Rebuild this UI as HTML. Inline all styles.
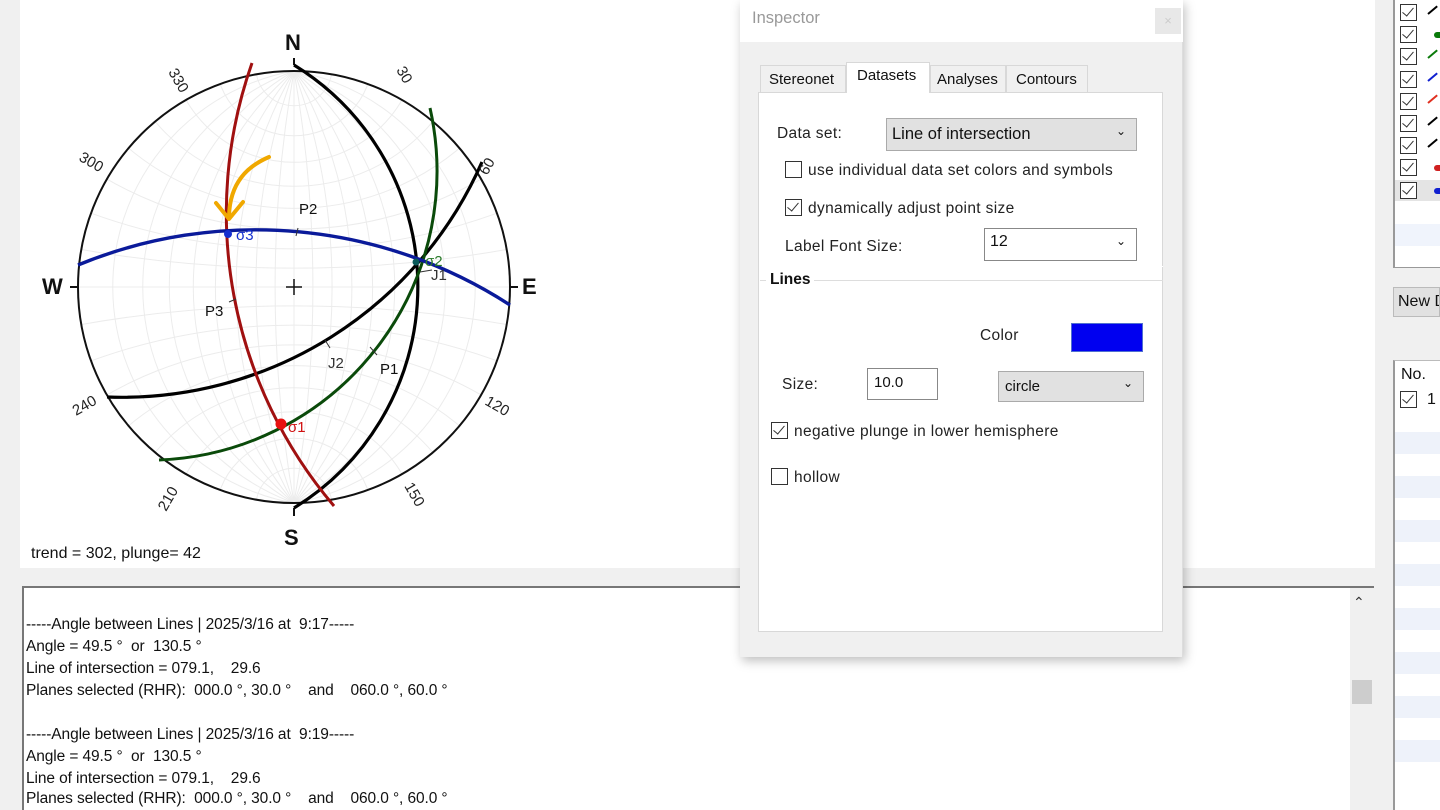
<!DOCTYPE html>
<html><head><meta charset="utf-8">
<style>
*{margin:0;padding:0;box-sizing:border-box}
html,body{width:1440px;height:810px;overflow:hidden}
body{background:#f0f0f0;font-family:"Liberation Sans",sans-serif;position:relative;color:#111}
.abs{position:absolute}
#plot{left:20px;top:0;width:1355px;height:568px;background:#fff}
#txt{left:22px;top:586px;width:1352px;height:224px;background:#fff;border-top:2px solid #777;border-left:2px solid #777;overflow:hidden}
#txt div{position:absolute;left:2px;font-size:15.5px;white-space:pre;letter-spacing:-0.1px}
.cb{position:absolute;width:17px;height:17px;border:1.5px solid #333;background:#fff}
.cb.on::after{content:"";position:absolute;left:4px;top:0px;width:5px;height:10px;border:solid #333;border-width:0 1.6px 1.6px 0;transform:rotate(40deg)}
#insp{left:740px;top:0;width:443px;height:657px;background:#f0f0f0;box-shadow:2px 4px 10px rgba(0,0,0,.25);border-right:1px solid #ddd}
.lbl{position:absolute;font-size:15.5px;color:#222;letter-spacing:0.35px;white-space:nowrap}
</style></head><body>
<div id="plot" class="abs"></div>
<svg class="abs" style="left:0;top:0" width="740" height="568">
<defs><clipPath id="cp"><circle cx="294" cy="287" r="216"/></clipPath></defs>
<g id="grid" clip-path="url(#cp)" stroke="#ececec" stroke-width="1" fill="none"></g>
<circle cx="294" cy="287" r="216" fill="none" stroke="#111" stroke-width="2"/>
<line x1="294" y1="58" x2="294" y2="65" stroke="#111" stroke-width="2"/>
<line x1="294" y1="508" x2="294" y2="516" stroke="#111" stroke-width="2"/>
<line x1="70" y1="287" x2="78" y2="287" stroke="#111" stroke-width="2"/>
<line x1="510" y1="287" x2="518" y2="287" stroke="#111" stroke-width="2"/>
<line x1="286" y1="287" x2="302" y2="287" stroke="#111" stroke-width="1.5"/>
<line x1="294" y1="279" x2="294" y2="295" stroke="#111" stroke-width="1.5"/>
<g fill="none" stroke-width="3.2">
<path d="M294 65 A260 260 0 0 1 294 508" stroke="#000"/>
<path d="M107 397 A393 393 0 0 0 482 162" stroke="#000"/>
</g>
<g fill="none" stroke-width="3">
<path d="M430 108 A289 289 0 0 1 159 460" stroke="#0a4a0a"/>
<path d="M252 63 A452 452 0 0 0 334 506" stroke="#a01010"/>
<path d="M78 265 A467 467 0 0 1 510 305" stroke="#0a1a9a" stroke-width="3.4"/>
</g>
<g stroke="#333" stroke-width="1"><line x1="298" y1="228" x2="296" y2="236"/><line x1="229" y1="302" x2="236" y2="299"/><line x1="325" y1="340" x2="330" y2="348"/><line x1="370" y1="347" x2="377" y2="355"/><line x1="420" y1="272" x2="432" y2="270"/></g>
<circle cx="281" cy="424" r="5.5" fill="#e81010"/>
<circle cx="228" cy="234" r="4" fill="#1530d0"/>
<circle cx="416" cy="262" r="3.5" fill="#0a5a5a"/>
<g font-size="15" fill="#111">
<text x="299" y="214">P2</text><text x="205" y="316">P3</text><text x="328" y="368" fill="#333">J2</text><text x="380" y="374">P1</text><text x="431" y="280" fill="#333">J1</text>
<text x="236" y="240" fill="#1530d0">σ3</text><text x="425" y="266" fill="#2a7a2a">σ2</text><text x="288" y="432" fill="#d01010">σ1</text>
</g>
<g font-size="22" font-weight="bold" fill="#111">
<text x="285" y="50">N</text><text x="284" y="545">S</text><text x="42" y="294">W</text><text x="522" y="294">E</text>
</g>
<g font-size="15" fill="#222">
<text transform="translate(168,72) rotate(60)">330</text>
<text transform="translate(396,70) rotate(60)">30</text>
<text transform="translate(78,160) rotate(30)">300</text>
<text transform="translate(487,176) rotate(-60)">60</text>
<text transform="translate(484,404) rotate(30)">120</text>
<text transform="translate(404,486) rotate(60)">150</text>
<text transform="translate(166,512) rotate(-60)">210</text>
<text transform="translate(76,416) rotate(-30)">240</text>
</g>
<text x="31" y="558" font-size="16" fill="#111">trend = 302, plunge= 42</text>
<path d="M269 157 C248 166 230 182 229 216" fill="none" stroke="#f0a800" stroke-width="4" stroke-linecap="round"/>
<path d="M216 203 L229 219 L243 202" fill="none" stroke="#f0a800" stroke-width="4" stroke-linecap="round" stroke-linejoin="round"/>
</svg>

<div id="txt" class="abs">
<div style="top:28px">-----Angle between Lines | 2025/3/16 at  9:17-----</div>
<div style="top:50px">Angle = 49.5 °  or  130.5 °</div>
<div style="top:72px">Line of intersection = 079.1,    29.6</div>
<div style="top:94px">Planes selected (RHR):  000.0 °, 30.0 °    and    060.0 °, 60.0 °</div>
<div style="top:138px">-----Angle between Lines | 2025/3/16 at  9:19-----</div>
<div style="top:160px">Angle = 49.5 °  or  130.5 °</div>
<div style="top:182px">Line of intersection = 079.1,    29.6</div>
<div style="top:202px">Planes selected (RHR):  000.0 °, 30.0 °    and    060.0 °, 60.0 °</div>
<div style="left:1326px;top:0;width:24px;height:222px;background:#f0f0f0"></div>
<div style="left:1329px;top:6px;font-size:14px;color:#333">&#8963;</div>
<div style="left:1328px;top:92px;width:20px;height:24px;background:#cdcdcd"></div>
</div>

<div class="abs" style="left:1393px;top:0;width:47px;height:268px;background:#fff;border-left:2px solid #999;border-bottom:1px solid #999"></div>
<div class="abs" style="left:1395px;top:180px;width:45px;height:21px;background:#e4e4e4"></div>
<div class="abs" style="left:1395px;top:224px;width:45px;height:22px;background:#f0f4fc"></div>
<div id="rl"></div>
<div class="abs" style="left:1393px;top:287px;width:47px;height:30px;background:#e1e1e1;border:1px solid #bbb;font-size:16px;padding:5px 0 0 4px;white-space:nowrap;overflow:hidden">New D</div>
<div class="abs" style="left:1393px;top:360px;width:47px;height:450px;background:#fff;border-left:2px solid #999;border-top:1px solid #bbb"></div>
<div id="rs"></div>
<div class="abs" style="left:1401px;top:366px;font-size:16px">No.</div>
<div class="cb on" style="left:1400px;top:391px"></div>
<div class="abs" style="left:1427px;top:391px;font-size:16px">1</div>

<div id="insp" class="abs">
<div class="abs" style="left:0;top:0;width:443px;height:42px;background:#fff"></div>
<div class="abs" style="left:12px;top:9px;font-size:16.5px;color:#999">Inspector</div>
<div class="abs" style="left:415px;top:8px;width:26px;height:26px;background:#e8e8e8;color:#ccc;font-size:13px;text-align:center;line-height:26px">×</div>
<div class="abs" style="left:18px;top:92px;width:405px;height:540px;background:#fff;border:1px solid #d8d8d8"></div>
<div class="abs" style="left:20px;top:65px;width:86px;height:27px;background:#f0f0f0;border:1px solid #d8d8d8;border-bottom:none;font-size:15px;padding:5px 0 0 8px">Stereonet</div>
<div class="abs" style="left:106px;top:62px;width:84px;height:31px;background:#fff;border:1px solid #d8d8d8;border-bottom:none;font-size:15px;padding:4px 0 0 10px">Datasets</div>
<div class="abs" style="left:190px;top:65px;width:76px;height:27px;background:#f0f0f0;border:1px solid #d8d8d8;border-bottom:none;font-size:15px;padding:5px 0 0 6px">Analyses</div>
<div class="abs" style="left:266px;top:65px;width:82px;height:27px;background:#f0f0f0;border:1px solid #d8d8d8;border-bottom:none;font-size:15px;padding:5px 0 0 9px">Contours</div>
<div class="lbl" style="left:37px;top:125px">Data set:</div>
<div class="abs" style="left:146px;top:118px;width:251px;height:33px;background:#e1e1e1;border:1px solid #aaa;font-size:16.5px;padding:6px 0 0 5px">Line of intersection<span style="position:absolute;right:10px;top:5px;font-size:12px">&#8964;</span></div>
<div class="cb" style="left:45px;top:161px"></div>
<div class="lbl" style="left:68px;top:162px">use individual data set colors and symbols</div>
<div class="cb on" style="left:45px;top:199px"></div>
<div class="lbl" style="left:68px;top:200px">dynamically adjust point size</div>
<div class="lbl" style="left:45px;top:238px">Label Font Size:</div>
<div class="abs" style="left:244px;top:228px;width:153px;height:33px;background:#fff;border:1px solid #888;font-size:16px;padding:4px 0 0 5px">12<span style="position:absolute;right:10px;top:5px;font-size:12px">&#8964;</span></div>
<div class="abs" style="left:20px;top:266px;width:403px;height:1px;background:#fff"></div>
<div class="abs" style="left:20px;top:280px;width:403px;height:1px;background:#ddd"></div>
<div class="abs" style="left:26px;top:271px;background:#fff;padding:0 4px;font-size:15.5px;font-weight:bold">Lines</div>
<div class="lbl" style="left:240px;top:327px">Color</div>
<div class="abs" style="left:331px;top:323px;width:72px;height:29px;background:#0000f0;border:1px solid #5070d0"></div>
<div class="lbl" style="left:42px;top:376px">Size:</div>
<div class="abs" style="left:127px;top:368px;width:71px;height:32px;background:#fff;border:1px solid #888;font-size:15px;padding:5px 0 0 6px">10.0</div>
<div class="abs" style="left:258px;top:371px;width:146px;height:31px;background:#e1e1e1;border:1px solid #aaa;font-size:15px;padding:6px 0 0 6px">circle<span style="position:absolute;right:10px;top:4px;font-size:12px">&#8964;</span></div>
<div class="cb on" style="left:31px;top:422px"></div>
<div class="lbl" style="left:54px;top:423px">negative plunge in lower hemisphere</div>
<div class="cb" style="left:31px;top:468px"></div>
<div class="lbl" style="left:54px;top:469px">hollow</div>
</div>

<script>
(function(){
var g=document.getElementById('grid'),cx=294,cy=287,R=216,h='';
for(var a=-80;a<=80;a+=10){
 if(a==0){h+='<line x1="'+cx+'" y1="'+(cy-R)+'" x2="'+cx+'" y2="'+(cy+R)+'"/>';continue;}
 var x0=R*Math.tan(a*Math.PI/360);var hc=(R*R-x0*x0)/(2*x0);var r=Math.abs(hc+x0);
 h+='<circle cx="'+(cx+x0+(x0>0?-r:r))+'" cy="'+cy+'" r="'+r+'"/>';
}
for(var b=10;b<=80;b+=10){
 var br=b*Math.PI/180;var c=R/Math.cos(br),rr=R*Math.tan(br);
 h+='<circle cx="'+cx+'" cy="'+(cy-c)+'" r="'+rr+'"/>';
 h+='<circle cx="'+cx+'" cy="'+(cy+c)+'" r="'+rr+'"/>';
}
h+='<line x1="'+(cx-R)+'" y1="'+cy+'" x2="'+(cx+R)+'" y2="'+cy+'"/>';
g.innerHTML=h;
var cols=['#000','#0a7a0a','#0a7a0a','#1020d0','#e03020','#000','#000','#d02020','#1020d0'];
var dot=[0,1,0,0,0,0,0,1,1],s='';
for(var i=0;i<9;i++){var y=4+i*22.2;
 s+='<div class="cb on" style="left:1400px;top:'+y+'px"></div>';
 if(dot[i])s+='<div class="abs" style="left:1434px;top:'+(y+6)+'px;width:6px;height:6px;border-radius:3px 0 0 3px;background:'+cols[i]+'"></div>';
 else s+='<div class="abs" style="left:1428px;top:'+(y+9)+'px;width:12px;height:2px;background:'+cols[i]+';transform:rotate(-40deg);transform-origin:0 50%"></div>';
}
document.getElementById('rl').innerHTML=s;
var t='';for(var y=432;y<780;y+=44)t+='<div class="abs" style="left:1395px;top:'+y+'px;width:45px;height:22px;background:#eef2fa"></div>';
document.getElementById('rs').innerHTML=t;
})();
</script>
</body></html>
